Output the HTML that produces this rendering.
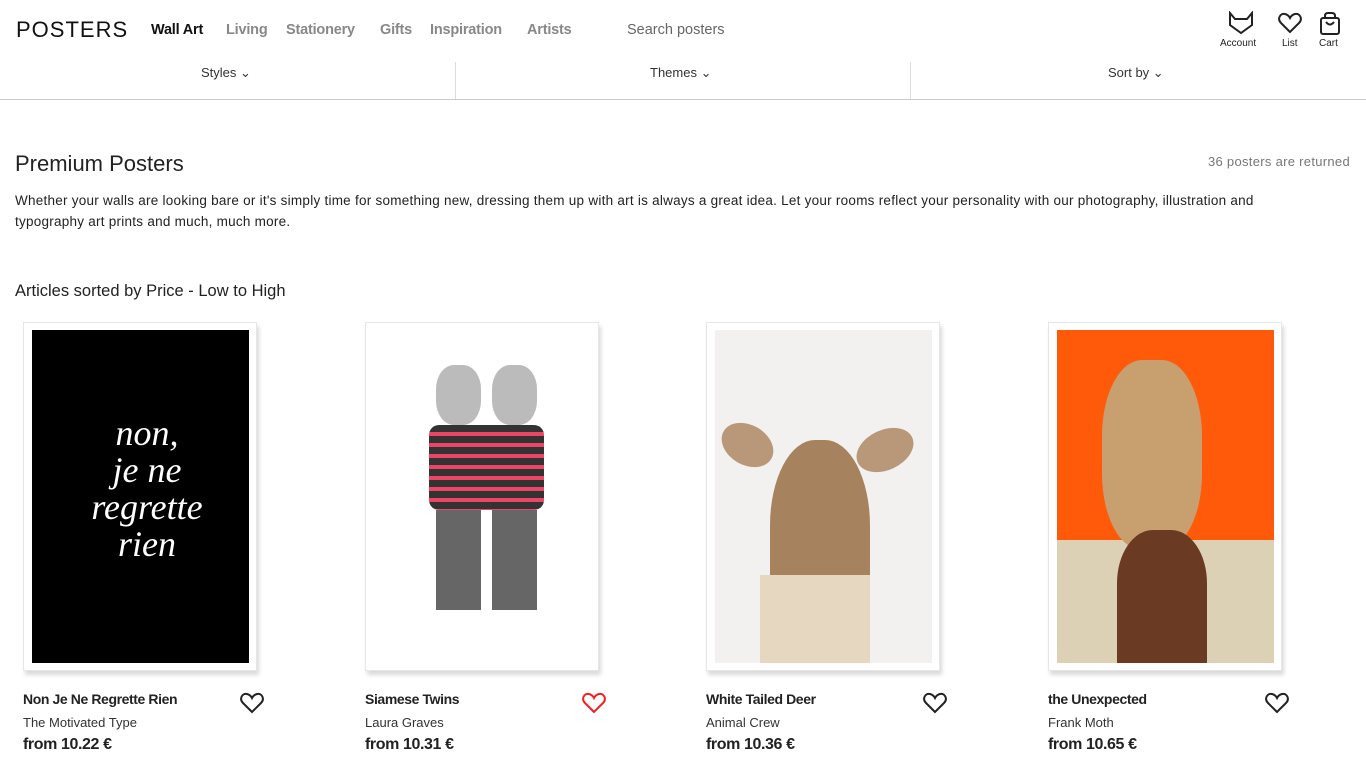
<!DOCTYPE html>
<html><head><meta charset="utf-8"><style>
*{margin:0;padding:0;box-sizing:border-box}
body{width:1366px;height:768px;overflow:hidden;background:#fff;font-family:"Liberation Sans",sans-serif;color:#222;position:relative}
.a{position:absolute}
.nav{font-weight:bold;font-size:14.5px;color:#888;top:22px;letter-spacing:-.2px}
.sub{font-size:13px;color:#333;top:65px}
.card{position:absolute;top:322px;width:234px;height:349px;background:#fff;border:1px solid #e6e6e6;box-shadow:2px 4px 4px rgba(0,0,0,.15)}
.img{position:absolute;left:8px;top:7px;width:217px;height:333px;overflow:hidden}
.t{position:absolute;top:691px;font-weight:bold;font-size:14px;color:#222;letter-spacing:-.4px}
.ar{position:absolute;top:715px;font-size:13px;color:#333}
.pr{position:absolute;top:736px;font-weight:bold;font-size:16px;color:#222;letter-spacing:-.4px}
.h{position:absolute;top:692px}
</style></head><body>
<div class="a" style="left:16px;top:17px;font-size:22px;letter-spacing:1px;color:#111">POSTERS</div>
<div class="a nav" style="left:151px;color:#111">Wall Art</div>
<div class="a nav" style="left:226px">Living</div>
<div class="a nav" style="left:286px">Stationery</div>
<div class="a nav" style="left:380px">Gifts</div>
<div class="a nav" style="left:430px">Inspiration</div>
<div class="a nav" style="left:527px">Artists</div>
<div class="a" style="left:627px;top:22px;font-size:14.5px;color:#666">Search posters</div>
<svg class="a" style="left:1228px;top:11px" width="26" height="24" viewBox="0 0 26 24" fill="none" stroke="#222" stroke-width="2"><path d="M2 2 L7 8 H19 L24 2 V14 L13 22 L2 14 Z"/></svg>
<div class="a" style="left:1220px;top:38px;font-size:10px">Account</div>
<svg class="a" style="left:1278px;top:12px" width="24" height="22" viewBox="0 0 24 22" fill="none" stroke="#222" stroke-width="2"><path d="M12 20 L3 11 C-1 7 2 1 7 2 C9 2.5 11 4 12 6 C13 4 15 2.5 17 2 C22 1 25 7 21 11 Z"/></svg>
<div class="a" style="left:1282px;top:38px;font-size:10px">List</div>
<svg class="a" style="left:1319px;top:12px" width="22" height="24" viewBox="0 0 22 24" fill="none" stroke="#222" stroke-width="2"><rect x="2" y="6" width="18" height="16" rx="2"/><path d="M6 6 V4 Q6 1 9 1 H13 Q16 1 16 4 V6"/><path d="M7 10 Q11 15 15 10"/></svg>
<div class="a" style="left:1319px;top:38px;font-size:10px">Cart</div>
<div class="a sub" style="left:201px">Styles ⌄</div>
<div class="a sub" style="left:650px">Themes ⌄</div>
<div class="a sub" style="left:1108px">Sort by ⌄</div>
<div class="a" style="left:455px;top:62px;width:1px;height:37px;background:#ddd"></div>
<div class="a" style="left:910px;top:62px;width:1px;height:37px;background:#ddd"></div>
<div class="a" style="left:0;top:99px;width:1366px;height:1px;background:#ccc"></div>
<div class="a" style="left:15px;top:151px;font-size:22px;color:#222">Premium Posters</div>
<div class="a" style="right:16px;top:154px;font-size:13px;color:#777;letter-spacing:.3px">36 posters are returned</div>
<div class="a" style="left:15px;top:190px;width:1295px;font-size:13.5px;line-height:21px;color:#222;letter-spacing:.25px">Whether your walls are looking bare or it's simply time for something new, dressing them up with art is always a great idea. Let your rooms reflect your personality with our photography, illustration and typography art prints and much, much more.</div>
<div class="a" style="left:15px;top:282px;font-size:16.5px;color:#222">Articles sorted by Price - Low to High</div>

<div class="card" style="left:23px"><div class="img" style="background:#000">
<div style="position:absolute;left:30px;top:85px;color:#fff;font-family:'Liberation Serif',serif;font-style:italic;font-size:36px;line-height:37px;text-align:center;width:170px">non,<br>je ne<br>regrette<br>rien</div></div></div>

<div class="card" style="left:365px"><div class="img" style="background:#fff">
<div style="position:absolute;left:62px;top:35px;width:45px;height:60px;background:#bbb;border-radius:40%"></div>
<div style="position:absolute;left:118px;top:35px;width:45px;height:60px;background:#bbb;border-radius:40%"></div>
<div style="position:absolute;left:55px;top:95px;width:115px;height:85px;background:repeating-linear-gradient(#333 0 7px,#e46 7px 11px);border-radius:10px"></div>
<div style="position:absolute;left:62px;top:180px;width:45px;height:100px;background:#666"></div>
<div style="position:absolute;left:118px;top:180px;width:45px;height:100px;background:#666"></div>
</div></div>

<div class="card" style="left:706px"><div class="img" style="background:#f2f1ef">
<div style="position:absolute;left:55px;top:110px;width:100px;height:190px;background:#a7825f;border-radius:45% 45% 20% 20%"></div>
<div style="position:absolute;left:5px;top:95px;width:55px;height:40px;background:#b9987a;border-radius:50%;transform:rotate(30deg)"></div>
<div style="position:absolute;left:140px;top:100px;width:60px;height:40px;background:#b9987a;border-radius:50%;transform:rotate(-25deg)"></div>
<div style="position:absolute;left:45px;top:245px;width:110px;height:95px;background:#e6d8c0"></div>
</div></div>

<div class="card" style="left:1048px"><div class="img" style="background:#ff5a0a">
<div style="position:absolute;left:0;top:210px;width:217px;height:123px;background:#ddd1b5"></div>
<div style="position:absolute;left:45px;top:30px;width:100px;height:190px;background:#c8a070;border-radius:40%"></div>
<div style="position:absolute;left:60px;top:200px;width:90px;height:133px;background:#6b3a22;border-radius:40% 40% 0 0"></div>
</div></div>

<div class="t" style="left:23px">Non Je Ne Regrette Rien</div><div class="ar" style="left:23px">The Motivated Type</div><div class="pr" style="left:23px">from 10.22 €</div>
<div class="t" style="left:365px">Siamese Twins</div><div class="ar" style="left:365px">Laura Graves</div><div class="pr" style="left:365px">from 10.31 €</div>
<div class="t" style="left:706px">White Tailed Deer</div><div class="ar" style="left:706px">Animal Crew</div><div class="pr" style="left:706px">from 10.36 €</div>
<div class="t" style="left:1048px">the Unexpected</div><div class="ar" style="left:1048px">Frank Moth</div><div class="pr" style="left:1048px">from 10.65 €</div>

<svg class="h" style="left:240px" width="24" height="22" viewBox="0 0 24 22" fill="none" stroke="#222" stroke-width="2"><path d="M12 20 L3 11 C-1 7 2 1 7 2 C9 2.5 11 4 12 6 C13 4 15 2.5 17 2 C22 1 25 7 21 11 Z"/></svg>
<svg class="h" style="left:582px" width="24" height="22" viewBox="0 0 24 22" fill="none" stroke="#e22" stroke-width="2"><path d="M12 20 L3 11 C-1 7 2 1 7 2 C9 2.5 11 4 12 6 C13 4 15 2.5 17 2 C22 1 25 7 21 11 Z"/></svg>
<svg class="h" style="left:923px" width="24" height="22" viewBox="0 0 24 22" fill="none" stroke="#222" stroke-width="2"><path d="M12 20 L3 11 C-1 7 2 1 7 2 C9 2.5 11 4 12 6 C13 4 15 2.5 17 2 C22 1 25 7 21 11 Z"/></svg>
<svg class="h" style="left:1265px" width="24" height="22" viewBox="0 0 24 22" fill="none" stroke="#222" stroke-width="2"><path d="M12 20 L3 11 C-1 7 2 1 7 2 C9 2.5 11 4 12 6 C13 4 15 2.5 17 2 C22 1 25 7 21 11 Z"/></svg>
</body></html>
